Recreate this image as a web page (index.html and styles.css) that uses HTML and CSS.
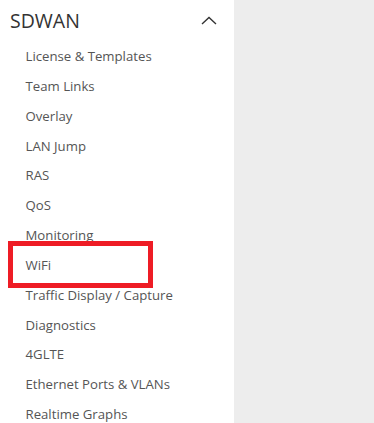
FILE: index.html
```html
<!DOCTYPE html>
<html lang="en">
<head>
<meta charset="UTF-8">
<title>SDWAN Menu</title>
<link rel="stylesheet" href="styles.css">
</head>
<body>
<div class="layout">
  <nav class="sidebar">
    <div class="group-head">
      <span class="group-title">SDWAN</span>
      <svg class="chevron" width="16" height="10" viewBox="0 0 16 10">
        <path d="M1 8 L8 1.5 L15 8" fill="none" stroke="#333" stroke-width="1.4"/>
      </svg>
    </div>
    <ul class="menu">
      <li>License &amp; Templates</li>
      <li>Team Links</li>
      <li>Overlay</li>
      <li>LAN Jump</li>
      <li>RAS</li>
      <li>QoS</li>
      <li>Monitoring</li>
      <li class="marked">WiFi<span class="highlight"></span></li>
      <li>Traffic Display / Capture</li>
      <li>Diagnostics</li>
      <li>4GLTE</li>
      <li>Ethernet Ports &amp; VLANs</li>
      <li>Realtime Graphs</li>
    </ul>
  </nav>
  <main class="content"></main>
</div>
</body>
</html>
```

FILE: styles.css
```css
*{
  box-sizing: border-box;
}
body{
  margin: 0;
  padding: 0;
  font-family: 'Open Sans', 'Noto Sans', sans-serif;
  background-color: #ffffff;
  overflow: hidden;
}
.layout {
  display: flex;
  height: 423px;
}
.sidebar {
  width: 234px;
  background-color: #ffffff;
}
.content {
  flex: 1;
  background-color: #ededed;
}
.group-head {
  height: 42px;
  display: flex;
  align-items: center;
  justify-content: space-between;
  padding: 0 17px 2px 10px;
}
.group-title {
  font-size: 19.5px;
  color: #333;
}
.chevron {
  display: block;
  margin-top: 2px;
}
.menu {
  list-style: none;
  margin: 0;
  padding: 0;
}
.menu li {
  height: 29.85px;
  line-height: 29.85px;
  padding-left: 25.5px;
  font-size: 13.2px;
  color: #555;
  white-space: nowrap;
}
.menu li.marked {
  position: relative;
}
.highlight {
  position: absolute;
  left: 8px;
  top: -10px;
  width: 145px;
  height: 47px;
  border: 5px solid #ee1c25;
}
```
